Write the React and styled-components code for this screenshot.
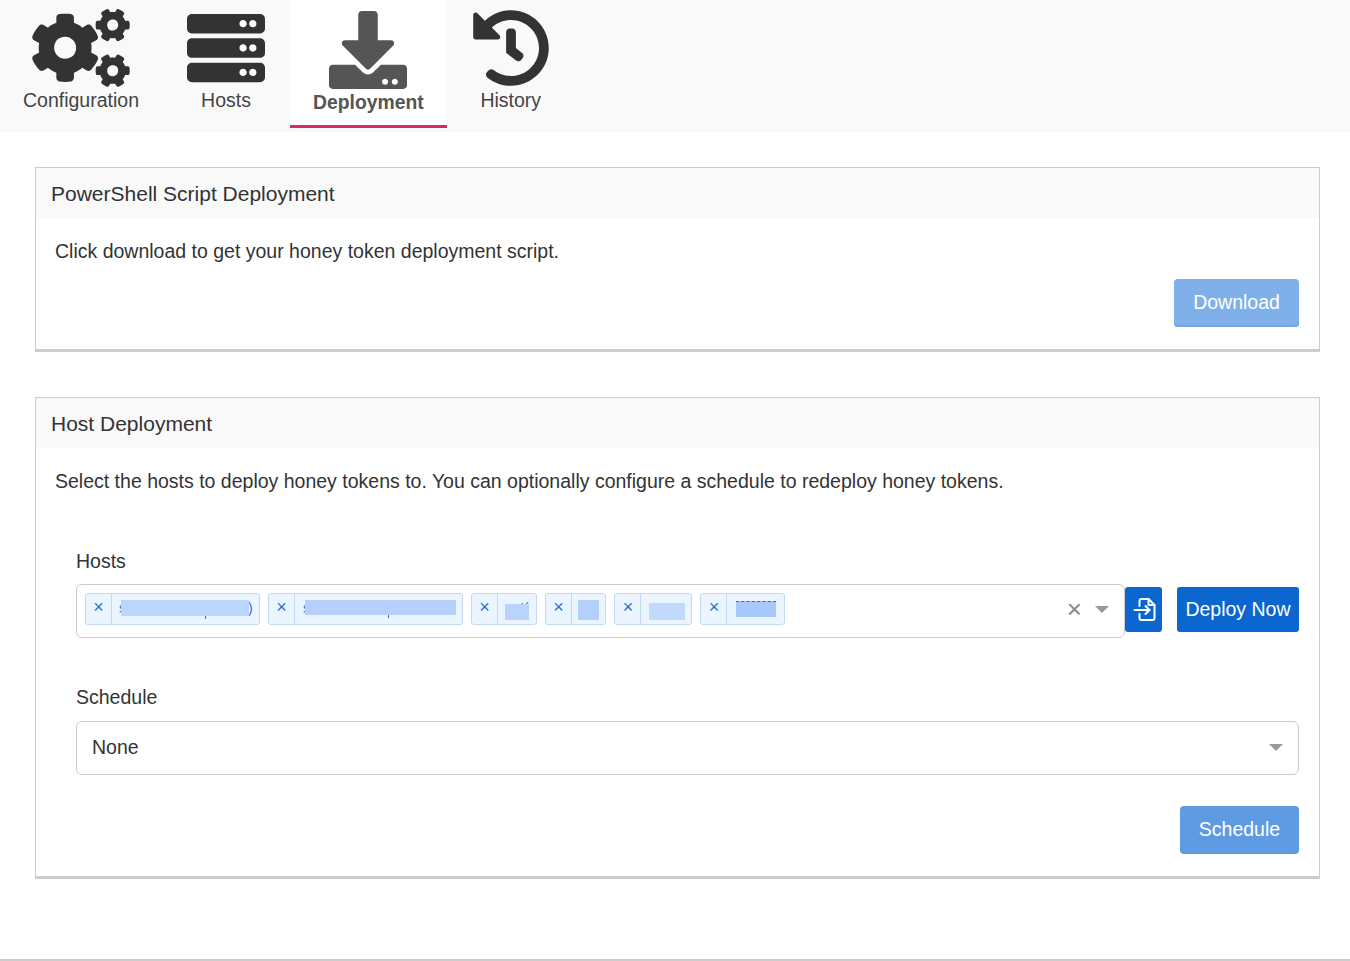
import styled, { createGlobalStyle } from 'styled-components';
import { FaCogs, FaServer, FaDownload, FaHistory } from 'react-icons/fa';

const GlobalStyle = createGlobalStyle`
    html, body {
        margin: 0;
        padding: 0;
        background: #fff;
        font-family: "Liberation Sans", Arial, sans-serif;
        color: #333;
    }
`;

const Nav = styled.nav`
    display: flex;
    height: 132px;
    background-color: #f9f9f9;
`;

const Tab = styled.div`
    display: flex;
    flex-direction: column;
    align-items: center;
    box-sizing: border-box;
    height: 128px;
    margin-right: 2px;
    padding: ${(p) => (p.$active ? '11px' : '9px')} 23px 0;
    background-color: ${(p) => (p.$active ? '#fff' : 'transparent')};
    border-bottom: ${(p) => (p.$active ? '3px solid #d6296b' : 'none')};
    color: ${(p) => (p.$active ? '#555' : '#333')};
    font-size: ${(p) => (p.$active ? '19.35px' : '19.5px')};
    font-weight: ${(p) => (p.$active ? 700 : 400)};

    svg {
        display: block;
        width: ${(p) => p.$iconWidth || 78}px;
        height: 78px;
    }
`;

const TabLabel = styled.span`
    margin-top: 1px;
    line-height: 24px;
    color: ${(p) => (p.$active ? '#555' : '#444')};
`;

const Main = styled.main`
    padding: 35px 30px 0 35px;
`;

const Panel = styled.section`
    border: 1px solid #ccc;
    border-bottom: 3px solid #ccc;
    margin-bottom: ${(p) => p.$gap}px;
`;

const PanelHeader = styled.h2`
    margin: 0;
    height: 50px;
    padding-left: 15px;
    background-color: #f9f9f9;
    font-size: 21px;
    font-weight: 400;
    line-height: 52px;
    color: #333;
`;

const PanelBody = styled.div`
    padding: 19px 20px 22px 19px;
`;

const Text = styled.p`
    margin: 0;
    font-size: 19.5px;
    line-height: 28px;
    color: #333;
`;

const ButtonRow = styled.div`
    display: flex;
    justify-content: flex-end;
    margin-top: ${(p) => p.$top}px;
`;

const Button = styled.button`
    box-sizing: border-box;
    height: 48px;
    width: ${(p) => p.$width}px;
    padding: 0 0 2px;
    border: none;
    border-radius: 4px;
    background-color: ${(p) => p.$bg};
    box-shadow: ${(p) => (p.$edge ? 'inset 0 -2px 0 #73a5df' : 'none')};
    color: #fff;
    font-family: inherit;
    font-size: 19.5px;
`;

const Form = styled.div`
    padding-left: 21px;
    margin-top: 52px;
`;

const Label = styled.label`
    display: block;
    font-size: 19.5px;
    line-height: 28px;
    color: #333;
`;

const HostsRow = styled.div`
    display: flex;
    align-items: flex-start;
    margin: 9px 0 45px;
`;

const MultiSelect = styled.div`
    display: flex;
    align-items: center;
    flex: 1;
    box-sizing: border-box;
    height: 54px;
    padding: 0 15px 4px 8px;
    border: 1px solid #ccc;
    border-radius: 6px;
    background: #fff;
`;

const Chips = styled.div`
    display: flex;
    flex: 1;
    gap: 8px;
`;

const Chip = styled.div`
    display: flex;
    box-sizing: border-box;
    height: 32px;
    width: ${(p) => p.$width}px;
    border: 1px solid #c2d9f2;
    border-radius: 3px;
    background-color: #ebf5ff;
`;

const ChipRemove = styled.span`
    flex: 0 0 26px;
    box-sizing: border-box;
    border-right: 1px solid #c2d9f2;
    color: #1f72d8;
    font-size: 18px;
    line-height: 26px;
    text-align: center;
`;

const ChipLabel = styled.span`
    position: relative;
    flex: 1;
    overflow: hidden;
    color: #1f72d8;
`;

const Glyph = styled.span`
    position: absolute;
    left: ${(p) => p.$left}px;
    top: ${(p) => p.$top}px;
    font-size: 14px;
    line-height: 16px;
`;

// covers the host names, which are hidden in the picture
const Redacted = styled.span`
    position: absolute;
    left: ${(p) => p.$left}px;
    top: ${(p) => p.$top}px;
    width: ${(p) => p.$width}px;
    height: ${(p) => p.$height}px;
    background-color: ${(p) => p.$color};
    border-top: ${(p) => (p.$dashed ? '1px dashed #1f72d8' : 'none')};

    &::after {
        content: '';
        display: ${(p) => (p.$tick ? 'block' : 'none')};
        position: absolute;
        left: ${(p) => p.$tick}px;
        top: 100%;
        width: 1px;
        height: 3px;
        background-color: #1f72d8;
    }
`;

const ClearMark = styled.span`
    margin-right: 13px;
    color: #888;
    font-size: 26px;
    line-height: 24px;
`;

const Caret = styled.span`
    width: 0;
    height: 0;
    border-left: 7px solid transparent;
    border-right: 7px solid transparent;
    border-top: 7px solid #999;
`;

const IconButton = styled.button`
    display: flex;
    align-items: center;
    justify-content: center;
    box-sizing: border-box;
    width: 37px;
    height: 45px;
    margin: 3px 15px 0 0;
    padding: 0;
    border: none;
    border-radius: 3px;
    background-color: #0b66cf;
    color: #fff;
`;

const DeployButton = styled.button`
    box-sizing: border-box;
    width: 122px;
    height: 45px;
    margin-top: 3px;
    padding: 0 0 1px;
    border: none;
    border-radius: 3px;
    background-color: #0b66cf;
    color: #fff;
    font-family: inherit;
    font-size: 19.5px;
`;

const Select = styled.div`
    display: flex;
    align-items: center;
    justify-content: space-between;
    box-sizing: border-box;
    height: 54px;
    margin-top: 10px;
    padding: 0 15px 2px;
    border: 1px solid #ccc;
    border-radius: 6px;
    font-size: 19.5px;
    color: #333;
`;

const Footer = styled.footer`
    height: 0;
    border-top: 2px solid #ccc;
`;

const hosts = [
    { id: 1, width: 175, left: 9, top: 6, w: 128, h: 16, color: '#bcd6fb', tick: 84, glyphs: [{ left: 7, char: 's' }, { left: 136, char: ')' }] },
    { id: 2, width: 195, left: 10, top: 6, w: 151, h: 15, color: '#b5d1fb', tick: 83, glyphs: [{ left: 8, char: 's' }] },
    { id: 3, width: 66, left: 7, top: 10, w: 24, h: 16, color: '#b9d3fa', glyphs: [{ left: 23, char: "'(" }] },
    { id: 4, width: 61.4, left: 6, top: 6, w: 21, h: 20, color: '#b3cffa', glyphs: [] },
    { id: 5, width: 78, left: 7.6, top: 9, w: 36, h: 17, color: '#c1d9fb', glyphs: [] },
    { id: 6, width: 85, left: 9, top: 7, w: 40, h: 15, color: '#a6c8fb', dashed: true, glyphs: [] },
];

const ImportIcon = () => (
    <svg width="24" height="24" viewBox="-1.5 0 24 24" fill="none" stroke="currentColor" strokeWidth="2" strokeLinecap="round" strokeLinejoin="round">
        <path d="M6 8V3a2 2 0 0 1 2-2h7l6 6v13a2 2 0 0 1-2 2H8a2 2 0 0 1-2-2v-4" />
        <path d="M15 1v6h6" />
        <path d="M1 12h15" />
        <path d="M12 8l4 4-4 4" />
    </svg>
);

const App = () => (
    <>
        <GlobalStyle />
        <Nav>
            <Tab $iconWidth={98}>
                <FaCogs />
                <TabLabel>Configuration</TabLabel>
            </Tab>
            <Tab>
                <FaServer />
                <TabLabel>Hosts</TabLabel>
            </Tab>
            <Tab $active>
                <FaDownload />
                <TabLabel $active>Deployment</TabLabel>
            </Tab>
            <Tab>
                <FaHistory />
                <TabLabel>History</TabLabel>
            </Tab>
        </Nav>
        <Main>
            <Panel $gap={45}>
                <PanelHeader>PowerShell Script Deployment</PanelHeader>
                <PanelBody>
                    <Text>Click download to get your honey token deployment script.</Text>
                    <ButtonRow $top={14}>
                        <Button $width={125} $bg="#7fb0e9" $edge>Download</Button>
                    </ButtonRow>
                </PanelBody>
            </Panel>
            <Panel $gap={80}>
                <PanelHeader>Host Deployment</PanelHeader>
                <PanelBody>
                    <Text>Select the hosts to deploy honey tokens to. You can optionally configure a schedule to redeploy honey tokens.</Text>
                    <Form>
                        <Label>Hosts</Label>
                        <HostsRow>
                            <MultiSelect>
                                <Chips>
                                    {hosts.map((host) => (
                                        <Chip key={host.id} $width={host.width}>
                                            <ChipRemove>×</ChipRemove>
                                            <ChipLabel>
                                                {host.glyphs.map((glyph) => (
                                                    <Glyph key={glyph.left} $left={glyph.left} $top={6}>{glyph.char}</Glyph>
                                                ))}
                                                <Redacted $left={host.left} $top={host.top} $width={host.w} $height={host.h} $color={host.color} $tick={host.tick} $dashed={host.dashed} />
                                            </ChipLabel>
                                        </Chip>
                                    ))}
                                </Chips>
                                <ClearMark>×</ClearMark>
                                <Caret />
                            </MultiSelect>
                            <IconButton><ImportIcon /></IconButton>
                            <DeployButton>Deploy Now</DeployButton>
                        </HostsRow>
                        <Label>Schedule</Label>
                        <Select>
                            None
                            <Caret />
                        </Select>
                        <ButtonRow $top={31}>
                            <Button $width={119} $bg="#5f9be3">Schedule</Button>
                        </ButtonRow>
                    </Form>
                </PanelBody>
            </Panel>
        </Main>
        <Footer />
    </>
);

export default App;
